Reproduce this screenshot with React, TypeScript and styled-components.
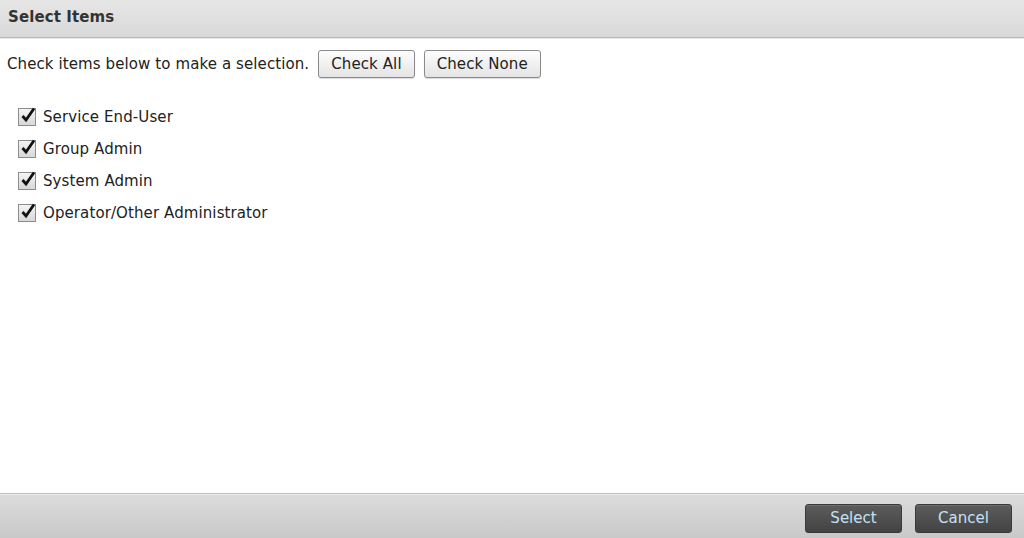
import React, { useState } from 'react';
import styled, { createGlobalStyle } from 'styled-components';

const GlobalStyle = createGlobalStyle`
  html, body {
    margin: 0;
    padding: 0;
    background: #fff;
  }
  body {
    font-family: 'DejaVu Sans', Verdana, sans-serif;
    color: #222;
  }
`;

const Dialog = styled.div`
  display: flex;
  flex-direction: column;
  width: 1024px;
  height: 538px;
  overflow: hidden;
`;

const Header = styled.div`
  height: 38px;
  display: flex;
  align-items: center;
  padding: 0 0 4px 8px;
  box-sizing: border-box;
  background: linear-gradient(#e6e6e6, #d9d9d9);
  border-bottom: 1px solid #b8b8b8;
  box-shadow: 0 1px 0 #e8e8e8;
`;

const Title = styled.h1`
  margin: 0;
  font-size: 15px;
  font-weight: bold;
  letter-spacing: 0.1px;
  color: #333;
`;

const Body = styled.div`
  flex: 1;
  padding: 12px 8px 0 7px;
  letter-spacing: 0.1px;
`;

const Toolbar = styled.div`
  display: flex;
  align-items: center;
  gap: 9px;
`;

const Hint = styled.span`
  font-size: 15px;
`;

const LightButton = styled.button`
  height: 28px;
  padding: 0 12px;
  font-family: inherit;
  font-size: 15px;
  letter-spacing: 0.1px;
  color: #222;
  background: linear-gradient(#fdfdfd, #e4e4e4);
  border: 1px solid #8a8a8a;
  border-radius: 3px;
  box-shadow: 0 1px 1px rgba(0, 0, 0, 0.15);
  cursor: pointer;
`;

const List = styled.div`
  display: flex;
  flex-direction: column;
  gap: 14px;
  margin-top: 30px;
  padding-left: 11px;
`;

const Item = styled.label`
  display: flex;
  align-items: center;
  gap: 7px;
  font-size: 15px;
  height: 18px;
  cursor: pointer;
`;

const Box = styled.span`
  position: relative;
  width: 16px;
  height: 16px;
  border: 1px solid #8c8c8c;
  background: linear-gradient(#f4f4f4, #d8d8d8);

  svg {
    position: absolute;
    left: 1px;
    top: -2px;
  }
`;

const Footer = styled.div`
  height: 45px;
  box-sizing: border-box;
  display: flex;
  align-items: center;
  justify-content: flex-end;
  gap: 13px;
  padding: 4px 12px 0 0;
  background: linear-gradient(#dcdcdc, #c9c9c9);
  border-top: 1px solid #bdbdbd;
  box-shadow: inset 0 1px 0 #ececec;
`;

const DarkButton = styled.button`
  width: 97px;
  height: 29px;
  font-family: inherit;
  font-size: 15px;
  color: #c4e2f6;
  background: linear-gradient(#5c5c5c, #434343);
  border: 1px solid #3a3a3a;
  border-radius: 3px;
  box-shadow: inset 0 1px 0 #6e6e6e;
  cursor: pointer;
`;

const items = ['Service End-User', 'Group Admin', 'System Admin', 'Operator/Other Administrator'];

const Check = () => (
  <svg width="16" height="16" viewBox="0 0 16 16">
    <path d="M2.5 9 L6 13 L14 1.5" fill="none" stroke="#111" strokeWidth="2.8" />
  </svg>
);

const App: React.FC = () => {
  const [checked, setChecked] = useState<boolean[]>(items.map(() => true));

  const toggle = (i: number) => setChecked(c => c.map((v, j) => (j === i ? !v : v)));

  return <Dialog>
    <GlobalStyle />
    <Header>
      <Title>Select Items</Title>
    </Header>
    <Body>
      <Toolbar>
        <Hint>Check items below to make a selection.</Hint>
        <LightButton onClick={() => setChecked(items.map(() => true))}>Check All</LightButton>
        <LightButton onClick={() => setChecked(items.map(() => false))}>Check None</LightButton>
      </Toolbar>
      <List>
        {items.map((name, i) => (
          <Item key={name} onClick={() => toggle(i)}>
            <Box>{checked[i] && <Check />}</Box>
            {name}
          </Item>
        ))}
      </List>
    </Body>
    <Footer>
      <DarkButton>Select</DarkButton>
      <DarkButton>Cancel</DarkButton>
    </Footer>
  </Dialog>;
};

export default App;
